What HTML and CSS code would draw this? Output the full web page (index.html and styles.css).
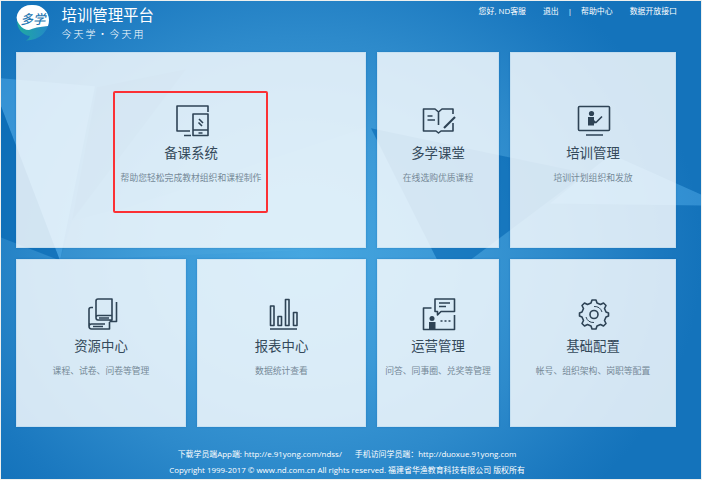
FILE: index.html
```html
<!DOCTYPE html>
<html lang="zh-CN">
<head>
<meta charset="utf-8">
<title>培训管理平台</title>
<link rel="stylesheet" href="styles.css">
</head>
<body>
<div class="page">
  <svg class="backdrop" viewBox="1 2 700 477" preserveAspectRatio="none" aria-hidden="true">
    <path class="facet-light" d="M1 79L95 87L60 261L1 107Z"/>
    <path class="facet-dark" d="M1 107L60 261L1 238Z"/>
    <path class="facet-shade" d="M97 88L186 70L72 221Z"/>
    <path class="facet-faint" d="M130 207L366 128V248L60 261L72 221Z"/>
    <path class="facet-dark" d="M371 129L586 174L471 260H437Z"/>
    <path class="facet-light" d="M611 155L701 195V206L550 204Z"/>
  </svg>
  <header class="header">
    <svg class="logo" viewBox="0 0 34 37">
      <defs><linearGradient id="tail" x1="0" x2="1"><stop stop-color="#20aaa0"/><stop offset="1" stop-color="#2388c8"/></linearGradient></defs>
      <path d="M17 1A16 15 0 0 0 1 16C1 25 6 31 14 32Q13 35 10 36.500Q20 36 26 31C31 26 33 21 33 16A16 15 0 0 0 17 1Z" fill="url(#tail)"/>
      <path d="M17 1A15 12.500 0 0 0 3 20Q7 26 13 26Q19 23 32 22Q33 19 33 16A16 15 0 0 0 17 1Z" fill="#fff"/>
      <text x="4.500" y="19.500" class="logo-text" textLength="25" lengthAdjust="spacingAndGlyphs">多学</text>
    </svg>
    <div class="brand"><h1>培训管理平台</h1><p>今天学·今天用</p></div>
    <nav class="nav"><span class="user">您好, ND客服</span><span class="exit">退出</span><span class="bar">|</span><span class="help">帮助中心</span><span>数据开放接口</span></nav>
  </header>
  <main class="tiles">
    <a class="tile wide">
      <svg class="icon" viewBox="0 0 36 34"><path d="M34 8V2H3V27H16M10 31.500H17M19 10H34V31.500H19ZM19 26H34M24.500 29H28.500M25 15L29 19M24.500 18.500L28 22"/></svg>
      <h2>备课系统</h2><p>帮助您轻松完成教材组织和课程制作</p>
      <span class="highlight"></span>
    </a>
    <a class="tile">
      <svg class="icon" viewBox="0 0 36 34"><path d="M32 10V5H21L17.500 8L14 5H2.500V27H15L17.500 29L20 27H32V19M17.500 8V21M6.500 12H11.500M6.500 16H14"/><path class="heavy" d="M23 24L34 13"/></svg>
      <h2>多学课堂</h2><p>在线选购优质课程</p>
    </a>
    <a class="tile">
      <svg class="icon" viewBox="0 0 36 34"><rect x="2.500" y="2.500" width="31" height="24" rx="1"/><path d="M10 31H27M18 18.500H20L26 12.500"/><circle class="solid" cx="15.500" cy="9.500" r="2.600"/><path class="solid" d="M12 13H18V16L20 18L18 19.500V21.500H12Z"/></svg>
      <h2>培训管理</h2><p>培训计划组织和发放</p>
    </a>
    <a class="tile">
      <svg class="icon shifted" viewBox="0 0 36 34"><path d="M13 2H27V23H13Q11 23 11 20.500V4Q11 2 13 2ZM27 18.500H13Q11 18.500 11 20.500M14 21H24M31.500 5V24.500H24.500M8 10.500H6Q4 10.500 4 12.500V29Q4 32 6.500 32H24.500V25M20 27H6.500Q4 27 4 29.500M8 29.500H18"/></svg>
      <h2>资源中心</h2><p>课程、试卷、问卷等管理</p>
    </a>
    <a class="tile">
      <svg class="icon" viewBox="0 0 36 34"><path d="M6.500 9H10V28.500H6.500ZM14 19.500H17.500V28.500H14ZM21.500 2.500H25V28.500H21.500ZM29.500 15.500H33V28.500H29.500ZM6 32H33"/></svg>
      <h2>报表中心</h2><p>数据统计查看</p>
    </a>
    <a class="tile">
      <svg class="icon" viewBox="0 0 36 34"><path d="M10.500 11H2.500V32.500H33.500V18M14 2H33.500V14.500H20L16.500 18V14.500H14ZM18 6H29M18 9.500H25"/><circle class="solid" cx="11" cy="21.500" r="2.500"/><path class="solid" d="M8 25H14.500V32H8Z"/><path class="dots" d="M19.500 24h2M23.500 24h2M27.500 24h2"/></svg>
      <h2>运营管理</h2><p>问答、同事圈、兑奖等管理</p>
    </a>
    <a class="tile">
      <svg class="icon" viewBox="0 0 36 34"><path d="M15 6L16 3H20L21 6L24.500 7.500L27.500 6L30 8.500L28.500 11.500L30 15L32.500 16V19L30 20L28.500 23.500L30 26.500L27.500 29L24.500 27.500L21 29L20 32H16L15 29L11.500 27.500L8.500 29L6 26.500L7.500 23.500L6 20L3.500 19V16L6 15L7.500 11.500L6 8.500L8.500 6L11.500 7.500Z"/><circle cx="18" cy="17.500" r="4"/><path class="thin" d="M18 9.500A8 8 0 0 1 26 15M18 25.500A8 8 0 0 1 10 20"/></svg>
      <h2>基础配置</h2><p>帐号、组织架构、岗职等配置</p>
    </a>
  </main>
  <footer class="footer">
    <div class="line"><span>下载学员端App端: http://e.91yong.com/ndss/</span><span>手机访问学员端：http://duoxue.91yong.com</span></div>
    <div class="line"><span>Copyright 1999-2017 © www.nd.com.cn All rights reserved. 福建省华渔教育科技有限公司 版权所有</span></div>
  </footer>
</div>
</body>
</html>
```

FILE: styles.css
```css
* { box-sizing: border-box; }
body { margin: 0; background: #eef0ee; font-family: "Open Sans", "Noto Sans CJK SC", sans-serif; }
h1, h2, p { margin: 0; font-weight: 400; }
.page {
  position: relative;
  width: 700px;
  height: 478px;
  margin: 1px;
  overflow: hidden;
  background: radial-gradient(ellipse 400px 340px at 43% 53%, #45a6e0 0%, #3c9ad7 35%, #2d8acb 64%, #1a78bf 90%, #1473bb 100%);
}
.backdrop { position: absolute; inset: 0; width: 700px; height: 478px; }
.facet-light { fill: #5ab4f0; fill-opacity: .42; }
.facet-dark { fill: #0062ae; fill-opacity: .55; }
.facet-shade { fill: #07569a; fill-opacity: .2; }
.facet-faint { fill: #7cc8f2; fill-opacity: .08; }
.header { position: relative; display: flex; height: 51px; padding: 3px 24px 0 15px; color: #fff; }
.logo { width: 34px; height: 37px; flex: none; }
.logo-text { font: italic 500 13px "Noto Sans CJK SC", sans-serif; fill: #2678b2; }
.brand { margin-left: 11.500px; }
.brand h1 { font-size: 15.400px; line-height: 23px; white-space: nowrap; }
.brand p { margin-top: -2px; font: 300 10px/17px "Noto Sans CJK SC", sans-serif; letter-spacing: 2px; white-space: nowrap; }
.nav { display: flex; margin-left: auto; margin-top: -1px; font-size: 7.900px; line-height: 16px; white-space: nowrap; }
.user { margin-right: 17px; }
.exit { margin-right: 9px; }
.bar { margin-right: 9px; }
.help { margin-right: 17px; }
.tiles {
  position: relative;
  display: grid;
  grid-template: 196px 168px / 170px 169px 122px 166px;
  gap: 11px;
  padding-left: 15px;
}
.tile {
  position: relative;
  display: flex;
  flex-direction: column;
  align-items: center;
  padding-top: 37px;
  border: 1px solid #eef6fbcc;
  background: rgba(255, 255, 255, .81);
  background-clip: padding-box;
  box-shadow: 0 0 2px #0b64aa66;
  color: #34495a;
}
.tile:nth-child(-n+3) { padding-top: 51px; }
.wide { grid-column: span 2; }
.icon { width: 36px; height: 34px; margin-left: 1px; fill: none; stroke: #2e4355; stroke-width: 1.600; stroke-linejoin: round; }
.icon.shifted { margin-left: 4px; }
.icon .solid { fill: #2e4355; stroke: none; }
.icon .thin { stroke-width: 1; }
.icon .dots { stroke-width: 1.600; }
.icon .heavy { stroke-width: 2.200; }
.tile h2 { margin-top: 4px; font-size: 13.400px; line-height: 23px; white-space: nowrap; }
.tile p { margin-top: 5px; font-size: 8.800px; line-height: 16px; color: #758997; white-space: nowrap; }
.highlight { position: absolute; left: 96px; top: 38px; width: 155px; height: 122px; border: 2px solid #fb3034; border-radius: 2px; }
.footer { position: relative; margin-top: 18px; color: #fff; font-size: 7.930px; }
.line { display: flex; justify-content: center; gap: 13px; height: 16px; line-height: 18px; white-space: nowrap; padding-right: 8px; }
```
